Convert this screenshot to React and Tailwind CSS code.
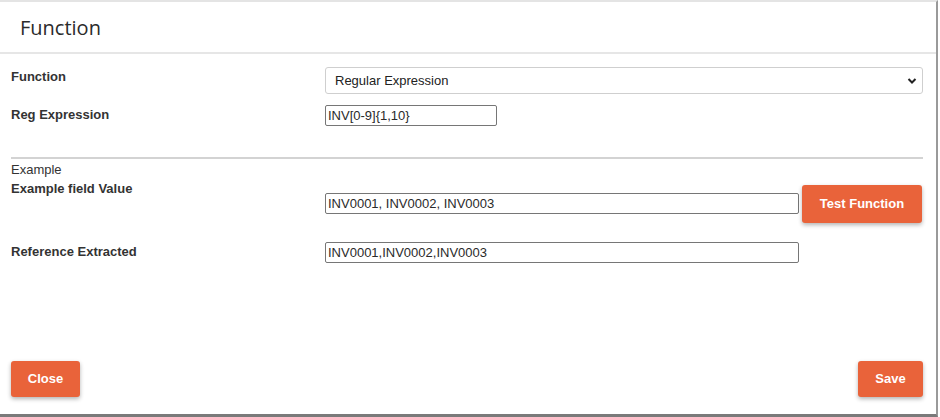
export default function App() {
  const label = "text-[13px] font-bold text-[#333] leading-[15px]";
  const input =
    "h-[21px] border border-[#767676] rounded-[2px] px-[2px] text-[13px] text-[#2a2a2a] leading-[19px] bg-white";
  const btn =
    "h-[36px] rounded-[3px] bg-[#e9633a] text-white text-[13px] font-bold shadow-[0_2px_4px_rgba(0,0,0,0.3)]";

  return (
    <div
      className="w-[940px] h-[417px] bg-white"
      style={{ fontFamily: '"Liberation Sans", Arial, sans-serif' }}
    >
      <div className="w-[938px] h-[417px] border-t-2 border-[#e4e4e4] border-r-2 border-r-[#9a9a9a] border-b-[3px] border-b-[#7a7a7a] flex flex-col">
        <div className="h-[52px] border-b-2 border-[#e6e6e6] flex items-center pl-[20px] pt-[2px]">
          <h1
            className="text-[20px] text-[#2b2b2b] font-medium"
            style={{ fontFamily: '"Open Sans", sans-serif' }}
          >
            Function
          </h1>
        </div>

        <div className="flex-1 px-[11px] flex flex-col">
          <div className="flex mt-[13px]">
            <div className={`${label} w-[314px] pt-[2px]`}>Function</div>
            <div className="w-[598px] h-[27px] border border-[#cfcfcf] rounded-[3px] flex items-center justify-between pl-[9px] pr-[5px] text-[13px] text-[#222]">
              <span>Regular Expression</span>
              <svg width="10" height="8" viewBox="0 0 10 8">
                <path d="M1.5 2 L5 5.5 L8.5 2" fill="none" stroke="#222" strokeWidth="2" />
              </svg>
            </div>
          </div>

          <div className="flex mt-[11px]">
            <div className={`${label} w-[314px] pt-[2px]`}>Reg Expression</div>
            <div className={`${input} w-[172px]`}>{"INV[0-9]{1,10}"}</div>
          </div>

          <div className="h-[2px] bg-[#d3d3d3] mt-[31px] w-[912px]" />

          <div className="text-[13px] text-[#333] leading-[15px] mt-[3px]">Example</div>

          <div className="flex">
            <div className={`${label} w-[314px] pt-[4px]`}>Example field Value</div>
            <div className={`${input} w-[474px] mt-[16px]`}>INV0001, INV0002, INV0003</div>
            <button className={`${btn} ml-[3px] mt-[8px] w-[120px] h-[38px]`}>Test Function</button>
          </div>

          <div className="flex mt-[19px]">
            <div className={`${label} w-[314px] pt-[2px]`}>Reference Extracted</div>
            <div className={`${input} w-[474px]`}>INV0001,INV0002,INV0003</div>
          </div>

          <div className="mt-auto mb-[17px] flex justify-between w-[912px]">
            <button className={`${btn} w-[69px]`}>Close</button>
            <button className={`${btn} w-[65px]`}>Save</button>
          </div>
        </div>
      </div>
    </div>
  );
}
